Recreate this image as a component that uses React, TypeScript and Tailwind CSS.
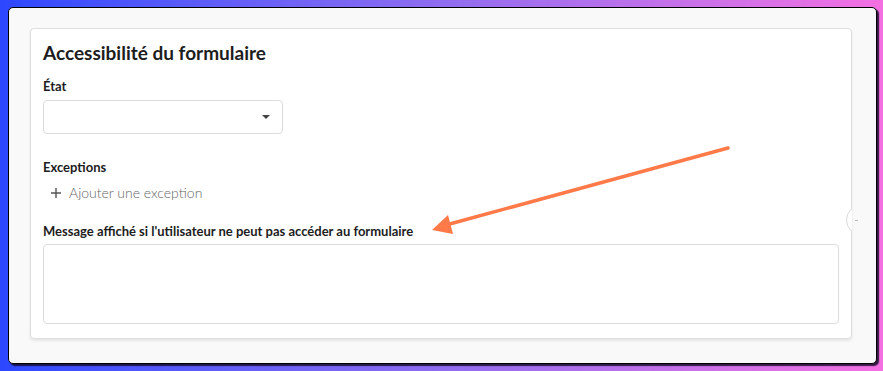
const Field = ({ label, children }: { label: string; children: React.ReactNode }) => (
  <div className="flex flex-col">
    <span className="text-[13px] font-bold leading-[18px] text-[#1d1d1d]">{label}</span>
    {children}
  </div>
);

export default function App() {
  return (
    <div
      className="relative h-[371px] w-[883px] overflow-hidden bg-gradient-to-r from-[#2c47ff] via-[#8f6cf0] to-[#f46fe2] pl-[8px] pt-[7px]"
      style={{ fontFamily: 'Lato, "Noto Sans", sans-serif' }}
    >
      <div className="relative flex h-[357px] w-[869px] rounded-[5px] border border-black bg-[#f9f9f9] pb-[24px] pl-[21px] pr-[24px] pt-[20px] shadow-[2px_2px_1px_rgba(20,10,40,0.85)]">
        <div className="flex flex-1 flex-col rounded-[4px] border border-[#dedede] bg-white px-[12px] pt-[11px] shadow-[0_2px_3px_rgba(0,0,0,0.08)]">
          <h1 className="text-[19px] font-bold leading-[26px] text-[#1d1d1d]">Accessibilité du formulaire</h1>

          <div className="mt-[11px]">
            <Field label="État">
              <div className="mt-[5px] flex h-[34px] w-[240px] items-center justify-end rounded-[4px] border border-[#dcdcdc] bg-white pr-[12px]">
                <span className="h-0 w-0 border-x-[4px] border-t-[4px] border-x-transparent border-t-[#444]" />
              </div>
            </Field>
          </div>

          <div className="mt-[24px]">
            <Field label="Exceptions">
              <div className="mt-[7px] flex items-center gap-[7px] pl-[7px] text-[14px] font-light leading-[20px] text-[#666]">
                <svg width="12" height="12" viewBox="0 0 12 12" className="text-[#555]">
                  <path d="M6 1v10M1 6h10" stroke="currentColor" strokeWidth="1.4" />
                </svg>
                <span>Ajouter une exception</span>
              </div>
            </Field>
          </div>

          <div className="mt-[19px]">
            <Field label="Message affiché si l'utilisateur ne peut pas accéder au formulaire">
              <div className="mt-[4px] h-[80px] w-full rounded-[4px] border border-[#dcdcdc] bg-white" />
            </Field>
          </div>
        </div>

        <div className="absolute left-[837px] top-[197px] h-[30px] w-[6px] overflow-hidden">
          <div className="h-[30px] w-[30px] rounded-full border border-[#d8d8d8] bg-white" />
        </div>
        <div className="absolute left-[846px] top-[212px] h-px w-[3px] bg-[#bbb]" />
      </div>

      <svg className="pointer-events-none absolute left-0 top-0" width="883" height="371">
        <line x1="728" y1="148" x2="446" y2="225" stroke="#ff7a48" strokeWidth="3.5" strokeLinecap="round" />
        <polygon points="432,230 448,215 453,234" fill="#ff7a48" />
      </svg>
    </div>
  );
}
